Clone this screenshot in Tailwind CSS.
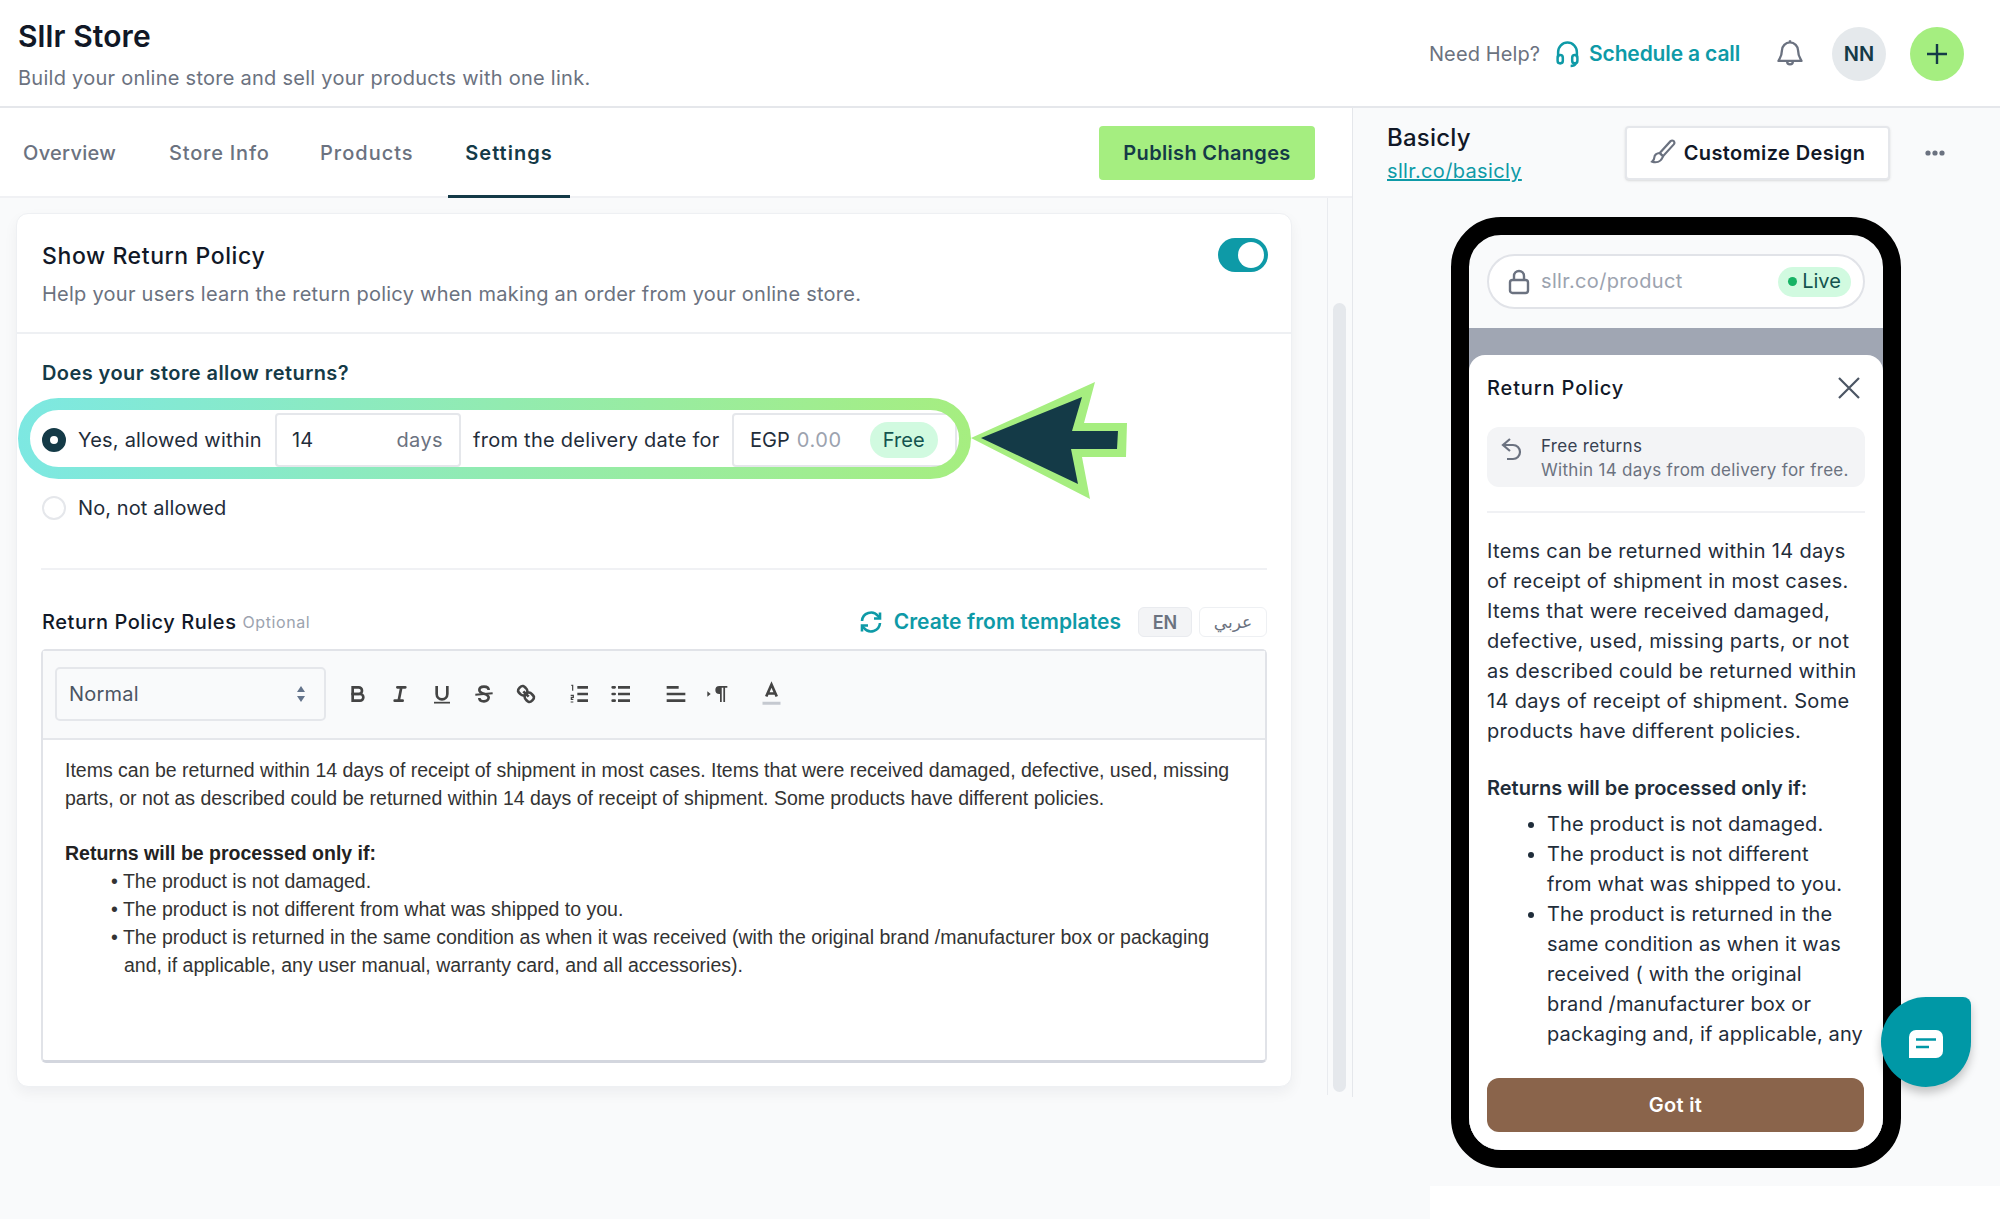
<!DOCTYPE html>
<html lang="en">
<head>
  <meta charset="UTF-8">
  <title>Sllr Store</title>
  <script src="https://cdn.jsdelivr.net/npm/@tailwindcss/browser@4"></script>
</head>
<body class="relative w-[2000px] h-[1219px] overflow-hidden bg-[#f9fafb] text-[#143a47] [font-family:Inter,sans-serif]">

  <!-- top bar -->
  <header class="h-[108px] bg-white border-b-2 border-[#e5e7eb] flex items-center justify-between pl-[18px] pr-[36px]">
    <div>
      <h1 class="mt-[4px] text-[30px] leading-[36px] font-semibold text-[#111827] tracking-[0.1px]">Sllr Store</h1>
      <p class="mt-[9px] text-[20px] leading-[30px] text-[#6b7280] tracking-[0.26px]">Build your online store and sell your products with one link.</p>
    </div>
    <div class="mt-[2px] flex items-center">
      <span class="text-[20px] text-[#6b7280] tracking-[0.1px]">Need Help?</span>
      <svg class="ml-[15px] w-[25px] h-[28px]" viewBox="0 0 24 26" fill="none" stroke="#0e9aa7" stroke-width="2.4"><path d="M3 16v-5a9 9 0 0 1 18 0v5"/><rect x="2.5" y="14" width="5" height="8" rx="2.5"/><rect x="16.5" y="14" width="5" height="8" rx="2.5"/><path d="M20 22c-1 2-3 2.500-5 2.500"/></svg>
      <span class="ml-[9px] text-[21px] font-semibold text-[#0e9aa7] tracking-[-0.15px]">Schedule a call</span>
      <svg class="ml-[36px] w-[28px] h-[30px]" viewBox="0 0 24 26" fill="none" stroke="#6b7280" stroke-width="2" stroke-linejoin="round"><path d="M12 3a7 7 0 0 0-7 7c0 5-2 7-3 9h20c-1-2-3-4-3-9a7 7 0 0 0-7-7z"/><path d="M12 1v2M9.500 19.500a2.500 2.500 0 0 0 5 0"/></svg>
      <div class="ml-[28px] w-[54px] h-[54px] rounded-full bg-[#e5e9ec] flex items-center justify-center text-[20px] font-semibold text-[#143a47]">NN</div>
      <div class="ml-[24px] w-[54px] h-[54px] rounded-full bg-[#a5ee80] flex items-center justify-center">
        <svg class="w-[24px] h-[24px]" viewBox="0 0 24 24" fill="none" stroke="#143a47" stroke-width="2.400"><path d="M12 2v20M2 12h20"/></svg>
      </div>
    </div>
  </header>

  <div class="flex">
    <!-- left column -->
    <div class="w-[1353px] h-[989px] border-r border-[#e5e7eb]">
      <nav class="h-[90px] bg-white border-b-2 border-[#f0f1f4] flex items-center justify-between pr-[37px]">
        <div class="flex h-full text-[20px] font-medium text-[#6b7280]">
          <a class="w-[169px] pl-[23px] pt-[2px] flex items-center tracking-[0.3px]">Overview</a>
          <a class="w-[151px] pt-[2px] flex items-center tracking-[0.8px]">Store Info</a>
          <a class="w-[128px] pt-[2px] flex items-center tracking-[1px]">Products</a>
          <a class="relative w-[122px] h-[90px] pt-[2px] flex items-center justify-center font-semibold text-[#143a47] border-b-[3px] border-[#143a47] tracking-[1px]">Settings</a>
        </div>
        <button class="mt-[2px] w-[216px] h-[54px] rounded-[4px] bg-[#a5ee80] text-[20px] font-semibold text-[#143a47] tracking-[0.33px]">Publish Changes</button>
      </nav>

      <div class="flex h-[897px]">
        <div class="w-[1328px] pl-[16px] pt-[15px] border-r border-[#e9ebef]">
          <section class="w-[1276px] h-[874px] bg-white rounded-[12px] border border-[#eef0f3] shadow-[0_6px_14px_rgba(17,24,39,0.05)]">
            <div class="relative h-[120px] pl-[25px] pt-[26px] border-b-2 border-[#eef0f3]">
              <h2 class="text-[23px] leading-[32px] font-medium text-[#111827] tracking-[0.6px]">Show Return Policy</h2>
              <p class="mt-[7px] text-[20px] leading-[30px] text-[#6b7280] tracking-[0.25px]">Help your users learn the return policy when making an order from your online store.</p>
              <div class="absolute right-[23px] top-[24px] w-[50px] h-[34px] rounded-full bg-[#0e9aa7] flex items-center justify-end pr-[4px]">
                <span class="w-[26px] h-[26px] rounded-full bg-white"></span>
              </div>
            </div>

            <div class="px-[24px]">
              <h3 class="mt-[25px] pl-[1px] text-[20px] leading-[28px] font-semibold text-[#143a47] tracking-[0.43px]">Does your store allow returns?</h3>
              <div class="mt-[26px] h-[54px] pl-[1px] flex items-center text-[20px] text-[#1f2d3a]">
                <span class="w-[24px] h-[24px] rounded-full border-[8px] border-[#143a47] bg-white"></span>
                <span class="ml-[12px] w-[197px] tracking-[0.2px]">Yes, allowed within</span>
                <div class="w-[186px] h-[54px] rounded-[4px] border-2 border-[#e5e7eb] flex items-center justify-between pl-[15px] pr-[16px]">
                  <span>14</span><span class="text-[#6b7280] tracking-[0.4px]">days</span>
                </div>
                <span class="ml-[12px] w-[259px] tracking-[0.27px]">from the delivery date for</span>
                <div class="w-[225px] h-[54px] rounded-[4px] border-2 border-[#e5e7eb] flex items-center pl-[16px]">
                  <span>EGP</span><span class="ml-[7px] text-[#9ca3af] tracking-[0.6px]">0.00</span>
                  <span class="ml-[28px] w-[68px] h-[36px] rounded-full bg-[#d1fae0] flex items-center justify-center text-[#14544f]">Free</span>
                </div>
              </div>
              <div class="mt-[26px] pl-[1px] flex items-center text-[20px] text-[#1f2d3a] tracking-[0.1px]">
                <span class="w-[24px] h-[24px] rounded-full border-2 border-[#e5e7eb] bg-white"></span>
                <span class="ml-[12px]">No, not allowed</span>
              </div>

              <div class="mt-[45px] h-[2px] bg-[#f0f1f4]"></div>

              <div class="mt-[37px] h-[30px] flex items-center">
                <span class="pl-[1px] text-[20px] font-medium text-[#111827] tracking-[0.55px]">Return Policy Rules</span>
                <span class="ml-[6px] text-[16px] text-[#9ca3af] tracking-[0.6px]">Optional</span>
                <svg class="ml-auto w-[24px] h-[24px]" viewBox="0 0 24 24" fill="none" stroke="#0e9aa7" stroke-width="2.600"><path d="M3 11a9 9 0 0 1 16-5l2 2M21 13a9 9 0 0 1-16 5l-2-2"/><path d="M21 2.500V8.500H15M3 21.500V15.500H9"/></svg>
                <span class="ml-[11px] text-[21px] font-semibold text-[#0e9aa7] tracking-[0.05px]">Create from templates</span>
                <span class="ml-[17px] w-[54px] h-[30px] rounded-[6px] bg-[#f3f4f6] border border-[#e9ebef] flex items-center justify-center text-[18px] font-semibold text-[#6b7280]">EN</span>
                <span class="ml-[7px] w-[68px] h-[30px] rounded-[6px] border border-[#eef0f3] flex items-center justify-center text-[17px] text-[#6b7280] [font-family:'Noto_Sans','DejaVu_Sans',sans-serif]">عربي</span>
              </div>

              <!-- editor -->
              <div class="mt-[12px] h-[414px] rounded-[5px] border-2 border-[#e1e3e8] border-b-[3px] border-b-[#d3d6de]">
                <div class="h-[89px] pb-[2px] bg-[#f9fafb] border-b-2 border-[#e5e7eb] flex items-center pl-[12px]">
                  <div class="w-[271px] h-[54px] rounded-[5px] border-2 border-[#e5e7eb] flex items-center justify-between pl-[12px] pr-[18px] text-[20px] text-[#4b5563] tracking-[0.2px] bg-[#f9fafb]">
                    Normal
                    <svg class="w-[10px] h-[18px]" viewBox="0 0 10 18" fill="#64748b"><path d="M5 1l4 6H1zM5 17l4-6H1z"/></svg>
                  </div>
                  <svg class="ml-[20px] w-[24px] h-[24px]" viewBox="0 0 18 18" fill="none" stroke="#444" stroke-width="2"><path d="M5,4H9.500A2.500,2.500,0,0,1,12,6.500v0A2.500,2.500,0,0,1,9.500,9H5V4Z"/><path d="M5,9h5.500A2.500,2.500,0,0,1,13,11.500v0A2.500,2.500,0,0,1,10.500,14H5V9Z"/></svg>
                  <svg class="ml-[18px] w-[24px] h-[24px]" viewBox="0 0 18 18" fill="none" stroke="#444" stroke-width="2" stroke-linecap="round"><path d="M7 4h6M5 14h6M8 14l2-10"/></svg>
                  <svg class="ml-[18px] w-[24px] h-[24px]" viewBox="0 0 18 18" fill="none" stroke="#444" stroke-width="2"><path d="M5,3V9a4,4,0,0,0,8,0V3"/><path d="M3 15.500h12" stroke-width="1.300"/></svg>
                  <svg class="ml-[18px] w-[24px] h-[24px]" viewBox="0 0 18 18" fill="none" stroke="#444" stroke-width="2"><path d="M2.500 9.500l13-1" stroke-width="1.500"/><path d="M12.500 6C12.500 4.500 11 3.500 9 3.500S5.500 4.500 5.500 6 7 8.200 9 8.800s3.500 1.400 3.500 2.900S11 14.500 9 14.500 5.500 13.500 5.500 12"/></svg>
                  <svg class="ml-[18px] w-[24px] h-[24px]" viewBox="0 0 18 18" fill="none" stroke="#444" stroke-width="2"><path d="M7 7l4 4"/><path d="M8.900,4.577a3.476,3.476,0,0,1,.36,4.679A3.476,3.476,0,0,1,4.577,8.900C3.185,7.500,2.035,6.400,4.217,4.217S7.500,3.185,8.900,4.577Z"/><path d="M13.423,9.100a3.476,3.476,0,0,0-4.679-.36,3.476,3.476,0,0,0,.36,4.679c1.392,1.392,2.500,2.542,4.679.36S14.815,10.500,13.423,9.100Z"/></svg>
                  <svg class="ml-[30px] w-[24px] h-[24px]" viewBox="0 0 18 18" fill="none" stroke="#444" stroke-width="2"><path d="M7 4h8M7 9h8M7 14h8"/><path d="M2.500 2.500h1v4M2 10h2v1.500H2.500v1.500H4M2 15h2" stroke-width="0.900"/></svg>
                  <svg class="ml-[18px] w-[24px] h-[24px]" viewBox="0 0 18 18" fill="none" stroke="#444" stroke-width="2"><path d="M6 4h9M6 9h9M6 14h9"/><path d="M2 4h1.500M2 9h1.500M2 14h1.500" stroke-linecap="round"/></svg>
                  <svg class="ml-[30px] w-[24px] h-[24px]" viewBox="0 0 18 18" fill="none" stroke="#444" stroke-width="2"><path d="M2 4h9M2 9h14M2 14h14"/></svg>
                  <svg class="ml-[18px] w-[24px] h-[24px]" viewBox="0 0 18 18" fill="#444"><path d="M1 11l2.500-2L1 7z"/><path d="M10 3a3 3 0 0 0 0 6h1V3z"/><rect x="10" y="3" width="6" height="1.300"/><rect x="10.500" y="3" width="1.300" height="12"/><rect x="13" y="3" width="1.300" height="12"/></svg>
                  <svg class="ml-[28px] w-[27px] h-[27px]" viewBox="0 0 18 18" fill="none" stroke="#444" stroke-width="1.800"><path d="M5.500 11L9 3l3.500 8M6.400 9h5.200"/><path d="M3 15.500h12" stroke="#c5c9d0" stroke-width="2"/></svg>
                </div>
                <div class="pl-[22px] pt-[16px] text-[19.5px] leading-[28px] text-[#333] whitespace-nowrap [font-family:'Liberation_Sans',Arial,sans-serif]">
                  <p>Items can be returned within 14 days of receipt of shipment in most cases. Items that were received damaged, defective, used, missing<br>parts, or not as described could be returned within 14 days of receipt of shipment. Some products have different policies.</p>
                  <p class="mt-[27px] font-bold text-[#222]">Returns will be processed only if:</p>
                  <p class="pl-[46px]">• The product is not damaged.</p>
                  <p class="pl-[46px]">• The product is not different from what was shipped to you.</p>
                  <p class="pl-[46px]">• The product is returned in the same condition as when it was received (with the original brand /manufacturer box or packaging<br><span class="pl-[13px]">and, if applicable, any user manual, warranty card, and all accessories).</span></p>
                </div>
              </div>
            </div>
          </section>
        </div>
        <div class="w-[24px] pl-[5px] pt-[105px]">
          <div class="w-[13px] h-[789px] rounded-full bg-[#e5e8ec]"></div>
        </div>
      </div>
    </div>

    <!-- right column -->
    <div class="flex-1">
      <div class="h-[109px] flex items-start pl-[34px] pt-[18px]">
        <div class="w-[238px] -mt-[4px]">
          <div class="text-[24px] leading-[32px] font-medium text-[#111827] tracking-[0.2px]">Basicly</div>
          <a class="block mt-[2px] text-[20px] leading-[30px] text-[#0e9aa7] underline tracking-[0.35px]">sllr.co/basicly</a>
        </div>
        <button class="w-[265px] h-[54px] rounded-[4px] bg-white border-2 border-[#e5e7eb] shadow-sm flex items-center justify-center text-[20px] font-semibold text-[#111827] tracking-[0.4px]">
          <svg class="w-[26px] h-[28px] mr-[8px]" viewBox="0 0 24 26" fill="none" stroke="#6b7280" stroke-width="2"><path d="M22 2c-1-.800-2-.800-3 0L9 13l3 3L22 5c.800-1 .800-2 0-3z"/><path d="M9 13c-3 0-5 2-5 4 0 2-1 3-2 4 3 1 8 1 10-5z"/></svg>
          Customize Design
        </button>
        <svg class="ml-[34px] mt-[23px] w-[22px] h-[8px]" viewBox="0 0 22 8" fill="#6b7280"><circle cx="4" cy="4" r="2.600"/><circle cx="11" cy="4" r="2.600"/><circle cx="18" cy="4" r="2.600"/></svg>
      </div>

      <!-- phone preview -->
      <div class="ml-[98px] w-[450px] h-[951px] rounded-[50px] border-[18px] border-black bg-[#f9fafb] overflow-hidden">
        <div class="h-[93px] px-[18px] pt-[19px]">
          <div class="h-[55px] rounded-full border-2 border-[#e1e3e8] bg-white flex items-center pl-[19px] pr-[12px] text-[20px]">
            <svg class="w-[22px] h-[26px]" viewBox="0 0 22 26" fill="none" stroke="#6b7280" stroke-width="2.400"><rect x="2" y="11" width="18" height="13" rx="2.500"/><path d="M6 11V7a5 5 0 0 1 10 0v4"/></svg>
            <span class="ml-[11px] -mt-[2px] text-[#9ca3af] tracking-[0.35px]">sllr.co/product</span>
            <span class="ml-auto w-[73px] h-[30px] pb-[1px] rounded-full bg-[#d1fae0] flex items-center justify-center text-[#14544f]"><i class="w-[9px] h-[9px] rounded-full bg-[#16b364] mr-[5px]"></i>Live</span>
          </div>
        </div>
        <div class="h-[27px] bg-[#a0a6b3]"></div>
        <div class="relative h-[813px] bg-[#a0a6b3]">
          <div class="h-full rounded-t-[16px] bg-white px-[18px]">
            <div class="h-[72px] pb-[7px] flex items-center justify-between">
              <span class="text-[20px] font-medium text-[#111827] tracking-[0.85px]">Return Policy</span>
              <svg class="w-[22px] h-[22px] mr-[5px]" viewBox="0 0 22 22" fill="none" stroke="#4b5563" stroke-width="2.200"><path d="M1 1l20 20M21 1L1 21"/></svg>
            </div>
            <div class="h-[60px] rounded-[12px] bg-[#f3f4f6] flex items-start pl-[14px]">
              <svg class="mt-[10px] w-[22px] h-[24px]" viewBox="0 0 22 24" fill="none" stroke="#6b7280" stroke-width="2.200"><path d="M9 2L2 8l7 6"/><path d="M2 8h10a7 7 0 0 1 0 14H6"/></svg>
              <div class="ml-[18px] text-[17px] leading-[24px] pt-[7px] tracking-[0.3px]">
                <div class="text-[#374151]">Free returns</div>
                <div class="text-[#6b7280]">Within 14 days from delivery for free.</div>
              </div>
            </div>
            <div class="mt-[24px] h-[2px] bg-[#f0f1f4]"></div>
            <div class="mt-[23px] text-[20px] leading-[30px] text-[#1f2d3a] whitespace-nowrap">
              <p class="tracking-[0.32px]">Items can be returned within 14 days<br>of receipt of shipment in most cases.<br>Items that were received damaged,<br>defective, used, missing parts, or not<br>as described could be returned within<br>14 days of receipt of shipment. Some<br>products have different policies.</p>
              <p class="mt-[27px] font-semibold">Returns will be processed only if:</p>
              <ul class="mt-[6px] ml-[60px] list-disc tracking-[0.15px]">
                <li>The product is not damaged.</li>
                <li>The product is not different<br>from what was shipped to you.</li>
                <li>The product is returned in the<br>same condition as when it was<br>received ( with the original<br>brand /manufacturer box or<br>packaging and, if applicable, any</li>
              </ul>
            </div>
          </div>
        </div>
      </div>
    </div>
  </div>

  <!-- "Got it" sits over the preview text -->
  <button class="absolute left-[1487px] top-[1078px] w-[377px] h-[54px] rounded-[12px] bg-[#8a644b] text-[20px] font-semibold text-white tracking-[0.3px]">Got it</button>

  <!-- white patch under the preview -->
  <div class="absolute left-[1430px] top-[1186px] w-[570px] h-[33px] bg-white"></div>

  <!-- chat bubble -->
  <div class="absolute left-[1881px] top-[997px] w-[90px] h-[90px] rounded-[45px] rounded-tr-[8px] bg-[#0098a6] shadow-[0_6px_10px_rgba(0,0,0,0.22)] flex items-center justify-center">
    <svg class="w-[34px] h-[28px] mt-[4px]" viewBox="0 0 34 28"><path d="M7 0h20a7 7 0 0 1 7 7v14a7 7 0 0 1-7 7H0V7a7 7 0 0 1 7-7z" fill="#fff"/><path d="M7 9.500h20M7 17h13" stroke="#0098a6" stroke-width="2.500"/></svg>
  </div>

  <!-- annotation ring + arrow over the radio row -->
  <svg class="absolute left-0 top-0 pointer-events-none" width="1160" height="520" viewBox="0 0 1160 520" fill="none">
    <defs><linearGradient id="ring" x1="18" x2="971" y1="0" y2="0" gradientUnits="userSpaceOnUse"><stop offset="0" stop-color="#7de8e2"/><stop offset="1" stop-color="#a6ee80"/></linearGradient></defs>
    <rect x="24" y="404" width="941" height="69" rx="34.500" stroke="url(#ring)" stroke-width="12"/>
    <polygon points="971,438 1095,382 1084,423 1127,423 1126,457 1082,457 1090,499" fill="#a6ee80"/>
    <polygon points="981,438 1082,397 1072,431 1118,431 1117,449 1071,449 1078,484" fill="#143a47"/>
  </svg>
</body>
</html>
